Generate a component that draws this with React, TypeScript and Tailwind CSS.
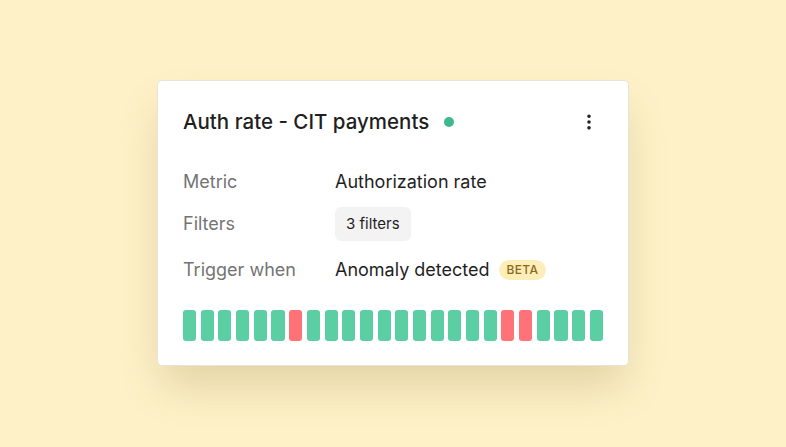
import { EllipsisVertical } from 'lucide-react';

const bars = [
  'g', 'g', 'g', 'g', 'g', 'g', 'r', 'g', 'g', 'g', 'g', 'g',
  'g', 'g', 'g', 'g', 'g', 'g', 'r', 'r', 'g', 'g', 'g', 'g',
];

export default function App() {
  return (
    <div
      className="flex h-[447px] w-[786px] items-start justify-center bg-[#fef1c7] pt-[80px]"
      style={{ fontFamily: 'Inter, "Noto Sans", sans-serif' }}
    >
      <div className="flex h-[286px] w-[472px] flex-col rounded-[5px] border border-[#e6e4dc] bg-white px-[25px] pt-[26px] shadow-[0_24px_40px_-6px_rgba(120,100,40,0.22)]">
        {/* Header */}
        <div className="flex h-[30px] items-center justify-between">
          <div className="flex items-center gap-[15px]">
            <h1 className="text-[20.5px] font-medium text-[#1f1f1f]">
              Auth rate - CIT payments
            </h1>
            <span className="h-[10px] w-[10px] rounded-full bg-[#3dba8c]" />
          </div>
          <EllipsisVertical className="mr-[4px] h-[20px] w-[20px] text-[#222]" strokeWidth={2.3} />
        </div>

        {/* Details */}
        <div className="mt-[31px] flex flex-col text-[18px] leading-[27px]">
          <div className="flex items-center">
            <div className="w-[152px] text-[#747474]">Metric</div>
            <div className="text-[#1f1f1f]">Authorization rate</div>
          </div>

          <div className="mt-[11.5px] flex items-center">
            <div className="w-[152px] text-[#747474]">Filters</div>
            <span className="inline-flex h-[34px] items-center rounded-[6px] bg-[#f3f3f3] px-[11px] text-[15px] text-[#1f1f1f]">
              3 filters
            </span>
          </div>

          <div className="mt-[15.5px] flex items-center">
            <div className="w-[152px] text-[#747474]">Trigger when</div>
            <div className="flex items-center gap-[9px] text-[#1f1f1f]">
              Anomaly detected
              <span className="inline-flex h-[20px] items-center rounded-full bg-[#fdedb8] px-[8px] text-[12px] font-medium leading-none tracking-[0.3px] text-[#8c6a1a]">
                BETA
              </span>
            </div>
          </div>
        </div>

        {/* Bars */}
        <div className="mt-[27px] flex h-[31px] gap-[4.6px]">
          {bars.map((b, i) => (
            <div
              key={i}
              className={b === 'r' ? 'flex-1 rounded-[3px] bg-[#fe7278]' : 'flex-1 rounded-[3px] bg-[#5bcfa3]'}
            />
          ))}
        </div>
      </div>
    </div>
  );
}
